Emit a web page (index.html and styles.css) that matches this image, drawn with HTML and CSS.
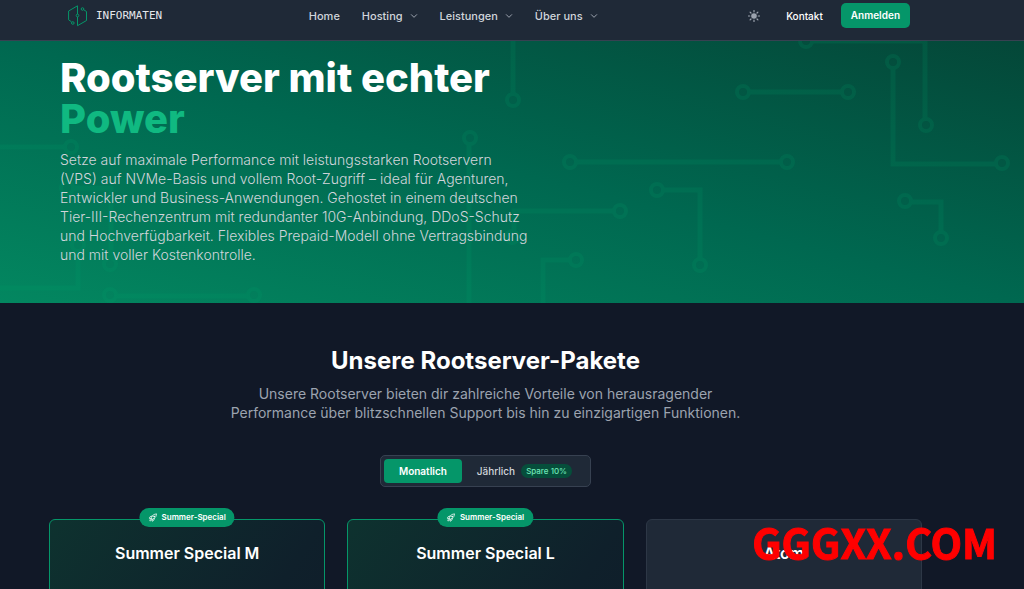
FILE: index.html
```html
<!DOCTYPE html>
<html lang="de">
<head>
    <meta charset="UTF-8">
    <meta name="viewport" content="width=device-width, initial-scale=1.0">
    <title>Rootserver - Informaten</title>
    <link rel="stylesheet" href="styles.css">
</head>
<body>
    <svg class="sprite" aria-hidden="true">
        <symbol id="chevron" viewBox="0 0 24 24">
            <path d="M4 8l8 8 8-8" fill="none" stroke="currentColor" stroke-width="3" stroke-linecap="round" stroke-linejoin="round"/>
        </symbol>
        <symbol id="rocket" viewBox="0 0 24 24">
            <path d="M15.590 14.370a6 6 0 0 1-5.840 7.380v-4.800m5.840-2.580a14.980 14.980 0 0 0 6.160-12.120A14.980 14.980 0 0 0 9.630 8.410m5.960 5.960a14.930 14.930 0 0 1-5.840 2.580m-.12-8.540a6 6 0 0 0-7.380 5.840h4.800m2.580-5.840a14.930 14.930 0 0 0-2.580 5.840m2.700 2.700a15 15 0 0 1-2.450-2.450m-1.760 2.080a4.500 4.500 0 0 0-1.760 4.310 4.500 4.500 0 0 0 4.310-1.760M16.500 9a1.500 1.500 0 1 1-3 0 1.500 1.500 0 0 1 3 0z" fill="none" stroke="currentColor" stroke-width="2" stroke-linecap="round" stroke-linejoin="round"/>
        </symbol>
    </svg>

    <header class="header">
        <div class="header-inner">
            <a class="logo" href="#">
                <svg width="20" height="22" viewBox="0 0 20 22" fill="none" stroke="#059669" aria-hidden="true">
                    <path d="M9.500 9V.8L.6 6v8.800l2.900 2"/>
                    <path d="M9.500 12v8.700l9-5.200V6.500l-2.600-1.600"/>
                    <circle cx="9.500" cy="10.500" r="1.300"/>
                    <circle cx="14.500" cy="4" r="1.300"/>
                    <circle cx="4.800" cy="18" r="1.300"/>
                </svg>
                <span>INFORMATEN</span>
            </a>
            <nav class="nav">
                <a href="#">Home</a>
                <a href="#">Hosting <svg class="chevron" aria-hidden="true"><use href="#chevron"/></svg></a>
                <a href="#">Leistungen <svg class="chevron" aria-hidden="true"><use href="#chevron"/></svg></a>
                <a href="#">Über uns <svg class="chevron" aria-hidden="true"><use href="#chevron"/></svg></a>
            </nav>
            <div class="actions">
                <button class="theme" type="button" aria-label="Farbschema wechseln">
                    <svg width="12" height="12" viewBox="0 0 12 12" aria-hidden="true">
                        <circle cx="6" cy="6" r="2.800" fill="currentColor"/>
                        <path d="M6 .5v1.300M6 10.200v1.300M.5 6h1.300M10.200 6h1.300M2.100 2.100l.9.9M9 9l.9.9M2.100 9.900l.9-.9M9 3l.9-.9" stroke="currentColor" stroke-width="1.200" stroke-linecap="round"/>
                    </svg>
                </button>
                <a class="contact" href="#">Kontakt</a>
                <a class="login" href="#">Anmelden</a>
            </div>
        </div>
    </header>

    <section class="hero">
        <svg class="circuit" viewBox="0 0 1024 262" preserveAspectRatio="xMidYMin slice" aria-hidden="true">
            <g fill="none" stroke="#00a56c" stroke-width="5">
                <path d="M0 106H64M73 147H111V216M78 210V247H0M116 255H248M469 104V262M513 0V52M613 170H514V189M570 219H543V262M577 121H781M663 149H700V218M749 51H842M893 27V123H996M812 0H925V78M911 161H941V191"/>
                <g stroke-width="4">
                    <circle cx="71" cy="106" r="6"/>
                    <circle cx="67" cy="147" r="6"/>
                    <circle cx="110" cy="223" r="6"/>
                    <circle cx="78" cy="204" r="6"/>
                    <circle cx="110" cy="254" r="6"/>
                    <circle cx="254" cy="254" r="6"/>
                    <circle cx="470" cy="97" r="6"/>
                    <circle cx="513" cy="59" r="6"/>
                    <circle cx="620" cy="170" r="6"/>
                    <circle cx="512" cy="196" r="6"/>
                    <circle cx="576" cy="219" r="6"/>
                    <circle cx="570" cy="121" r="6"/>
                    <circle cx="787" cy="121" r="6"/>
                    <circle cx="657" cy="149" r="6"/>
                    <circle cx="700" cy="224" r="6"/>
                    <circle cx="743" cy="51" r="6"/>
                    <circle cx="848" cy="51" r="6"/>
                    <circle cx="893" cy="21" r="6"/>
                    <circle cx="1002" cy="122" r="6"/>
                    <circle cx="806" cy="0" r="6"/>
                    <circle cx="926" cy="84" r="6"/>
                    <circle cx="905" cy="160" r="6"/>
                    <circle cx="941" cy="197" r="6"/>
                </g>
            </g>
        </svg>
        <div class="hero-text">
            <h1>Rootserver mit echter <span>Power</span></h1>
            <p>Setze auf maximale Performance mit leistungsstarken Rootservern (VPS) auf NVMe-Basis und vollem Root-Zugriff – ideal für Agenturen, Entwickler und Business-Anwendungen. Gehostet in einem deutschen Tier-III-Rechenzentrum mit redundanter 10G-Anbindung, DDoS-Schutz und Hochverfügbarkeit. Flexibles Prepaid-Modell ohne Vertragsbindung und mit voller Kostenkontrolle.</p>
        </div>
    </section>

    <main class="packages">
        <h2>Unsere Rootserver-Pakete</h2>
        <p class="intro">Unsere Rootserver bieten dir zahlreiche Vorteile von herausragender Performance über blitzschnellen Support bis hin zu einzigartigen Funktionen.</p>

        <div class="toggle">
            <button class="active" type="button">Monatlich</button>
            <button type="button">Jährlich <span class="save">Spare 10%</span></button>
        </div>

        <div class="cards">
            <article class="card special">
                <span class="badge"><svg aria-hidden="true"><use href="#rocket"/></svg>Summer-Special</span>
                <h3>Summer Special M</h3>
            </article>
            <article class="card special">
                <span class="badge"><svg aria-hidden="true"><use href="#rocket"/></svg>Summer-Special</span>
                <h3>Summer Special L</h3>
            </article>
            <article class="card">
                <h3>Atom</h3>
            </article>
        </div>
    </main>

    <div class="watermark">GGGXX.COM</div>
</body>
</html>
```
FILE: styles.css
```css
* {
    box-sizing: border-box;
}
html {
    overflow: hidden;
}
body {
    margin: 0;
    background: #111827;
    color: #fff;
    font-family: Inter, "Liberation Sans", sans-serif;
}
h1, h2, h3, p {
    margin: 0;
}
a {
    color: inherit;
    text-decoration: none;
}
button {
    border: none;
    background: none;
    color: inherit;
    font-family: inherit;
    cursor: pointer;
}
.sprite {
    display: none;
}

/* header */
.header {
    background: #1f2937;
    border-bottom: 1px solid #374151;
    padding: 0 114px 0 68px;
}
.header-inner {
    display: flex;
    align-items: center;
    justify-content: space-between;
    height: 40px;
    padding-bottom: 9px;
}
.logo {
    display: flex;
    align-items: center;
    gap: 8px;
    color: #e5e7eb;
    font-family: "DejaVu Sans Mono", monospace;
    font-size: 11px;
}
.nav {
    display: flex;
    gap: 22px;
    margin-right: 4px;
    color: #d1d5db;
    font-size: 11px;
    font-weight: 500;
}
.nav a {
    display: flex;
    align-items: center;
    gap: 7px;
}
.chevron {
    width: 8px;
    height: 8px;
    color: #9ca3af;
}
.actions {
    display: flex;
    align-items: center;
    font-size: 10px;
    font-weight: 600;
}
.theme {
    display: flex;
    padding: 0;
    margin-right: 26px;
    color: #9ca3af;
}
.contact {
    font-weight: 500;
}
.login {
    margin-left: 18px;
    padding: 6px 10px;
    border-radius: 5px;
    background: #059669;
    line-height: 13px;
}

/* hero */
.hero {
    position: relative;
    padding: 16px 114px 39px 60px;
    background: linear-gradient(to top right, #038760, #006850, #044738);
}
.circuit {
    position: absolute;
    inset: 0;
    width: 100%;
    height: 100%;
    opacity: 0.15;
}
.hero-text {
    position: relative;
    max-width: 472px;
}
.hero h1 {
    margin-bottom: 11px;
    font-size: 40px;
    font-weight: 800;
    line-height: 41px;
}
.hero h1 span {
    color: #10b981;
}
.hero p {
    color: #d1d5db;
    font-size: 14px;
    font-weight: 300;
    line-height: 19px;
}

/* packages */
.packages {
    padding: 42px 102px 0 49px;
}
.packages h2 {
    font-size: 24px;
    font-weight: 700;
    line-height: 32px;
    text-align: center;
}
.intro {
    max-width: 520px;
    margin: 7px auto 0;
    color: #9ca3af;
    font-size: 14px;
    line-height: 19px;
    text-align: center;
}
.toggle {
    display: flex;
    width: fit-content;
    margin: 33px auto 32px;
    padding: 3px;
    border: 1px solid #374151;
    border-radius: 5px;
    background: #1f2937;
}
.toggle button {
    display: flex;
    align-items: center;
    gap: 6px;
    height: 24px;
    padding: 0 15px;
    border-radius: 4px;
    color: #d1d5db;
    font-size: 10px;
    font-weight: 500;
}
.toggle .active {
    background: #059669;
    color: #fff;
    font-weight: 600;
}
.toggle .save {
    padding: 1px 5px;
    border-radius: 8px;
    background: #064e3b;
    color: #6ee7b7;
    font-size: 8px;
    line-height: 12px;
}
.cards {
    display: grid;
    grid-template-columns: repeat(3, 1fr);
    gap: 22px;
}
.card {
    position: relative;
    min-height: 400px;
    padding: 21px 20px;
    border: 1px solid #2d3746;
    border-radius: 6px;
    background: #1f2937;
}
.card.special {
    border-color: #059669;
    background: linear-gradient(to bottom right, #0e322f, #0f202b 50%, #111827);
}
.card h3 {
    font-size: 16px;
    font-weight: 600;
    line-height: 24px;
    text-align: center;
}
.badge {
    position: absolute;
    top: -12px;
    left: 50%;
    transform: translateX(-50%);
    display: flex;
    align-items: center;
    gap: 4px;
    padding: 3px 9px;
    border-radius: 10px;
    background: #059669;
    font-size: 8px;
    font-weight: 600;
    line-height: 13px;
    white-space: nowrap;
}
.badge svg {
    width: 9px;
    height: 9px;
}

.watermark {
    position: fixed;
    right: 27px;
    bottom: 26px;
    color: #f00;
    font-family: "Noto Sans CJK SC", sans-serif;
    font-size: 41px;
    font-weight: 700;
    line-height: 44px;
    -webkit-text-stroke: 1px #f00;
}
```
